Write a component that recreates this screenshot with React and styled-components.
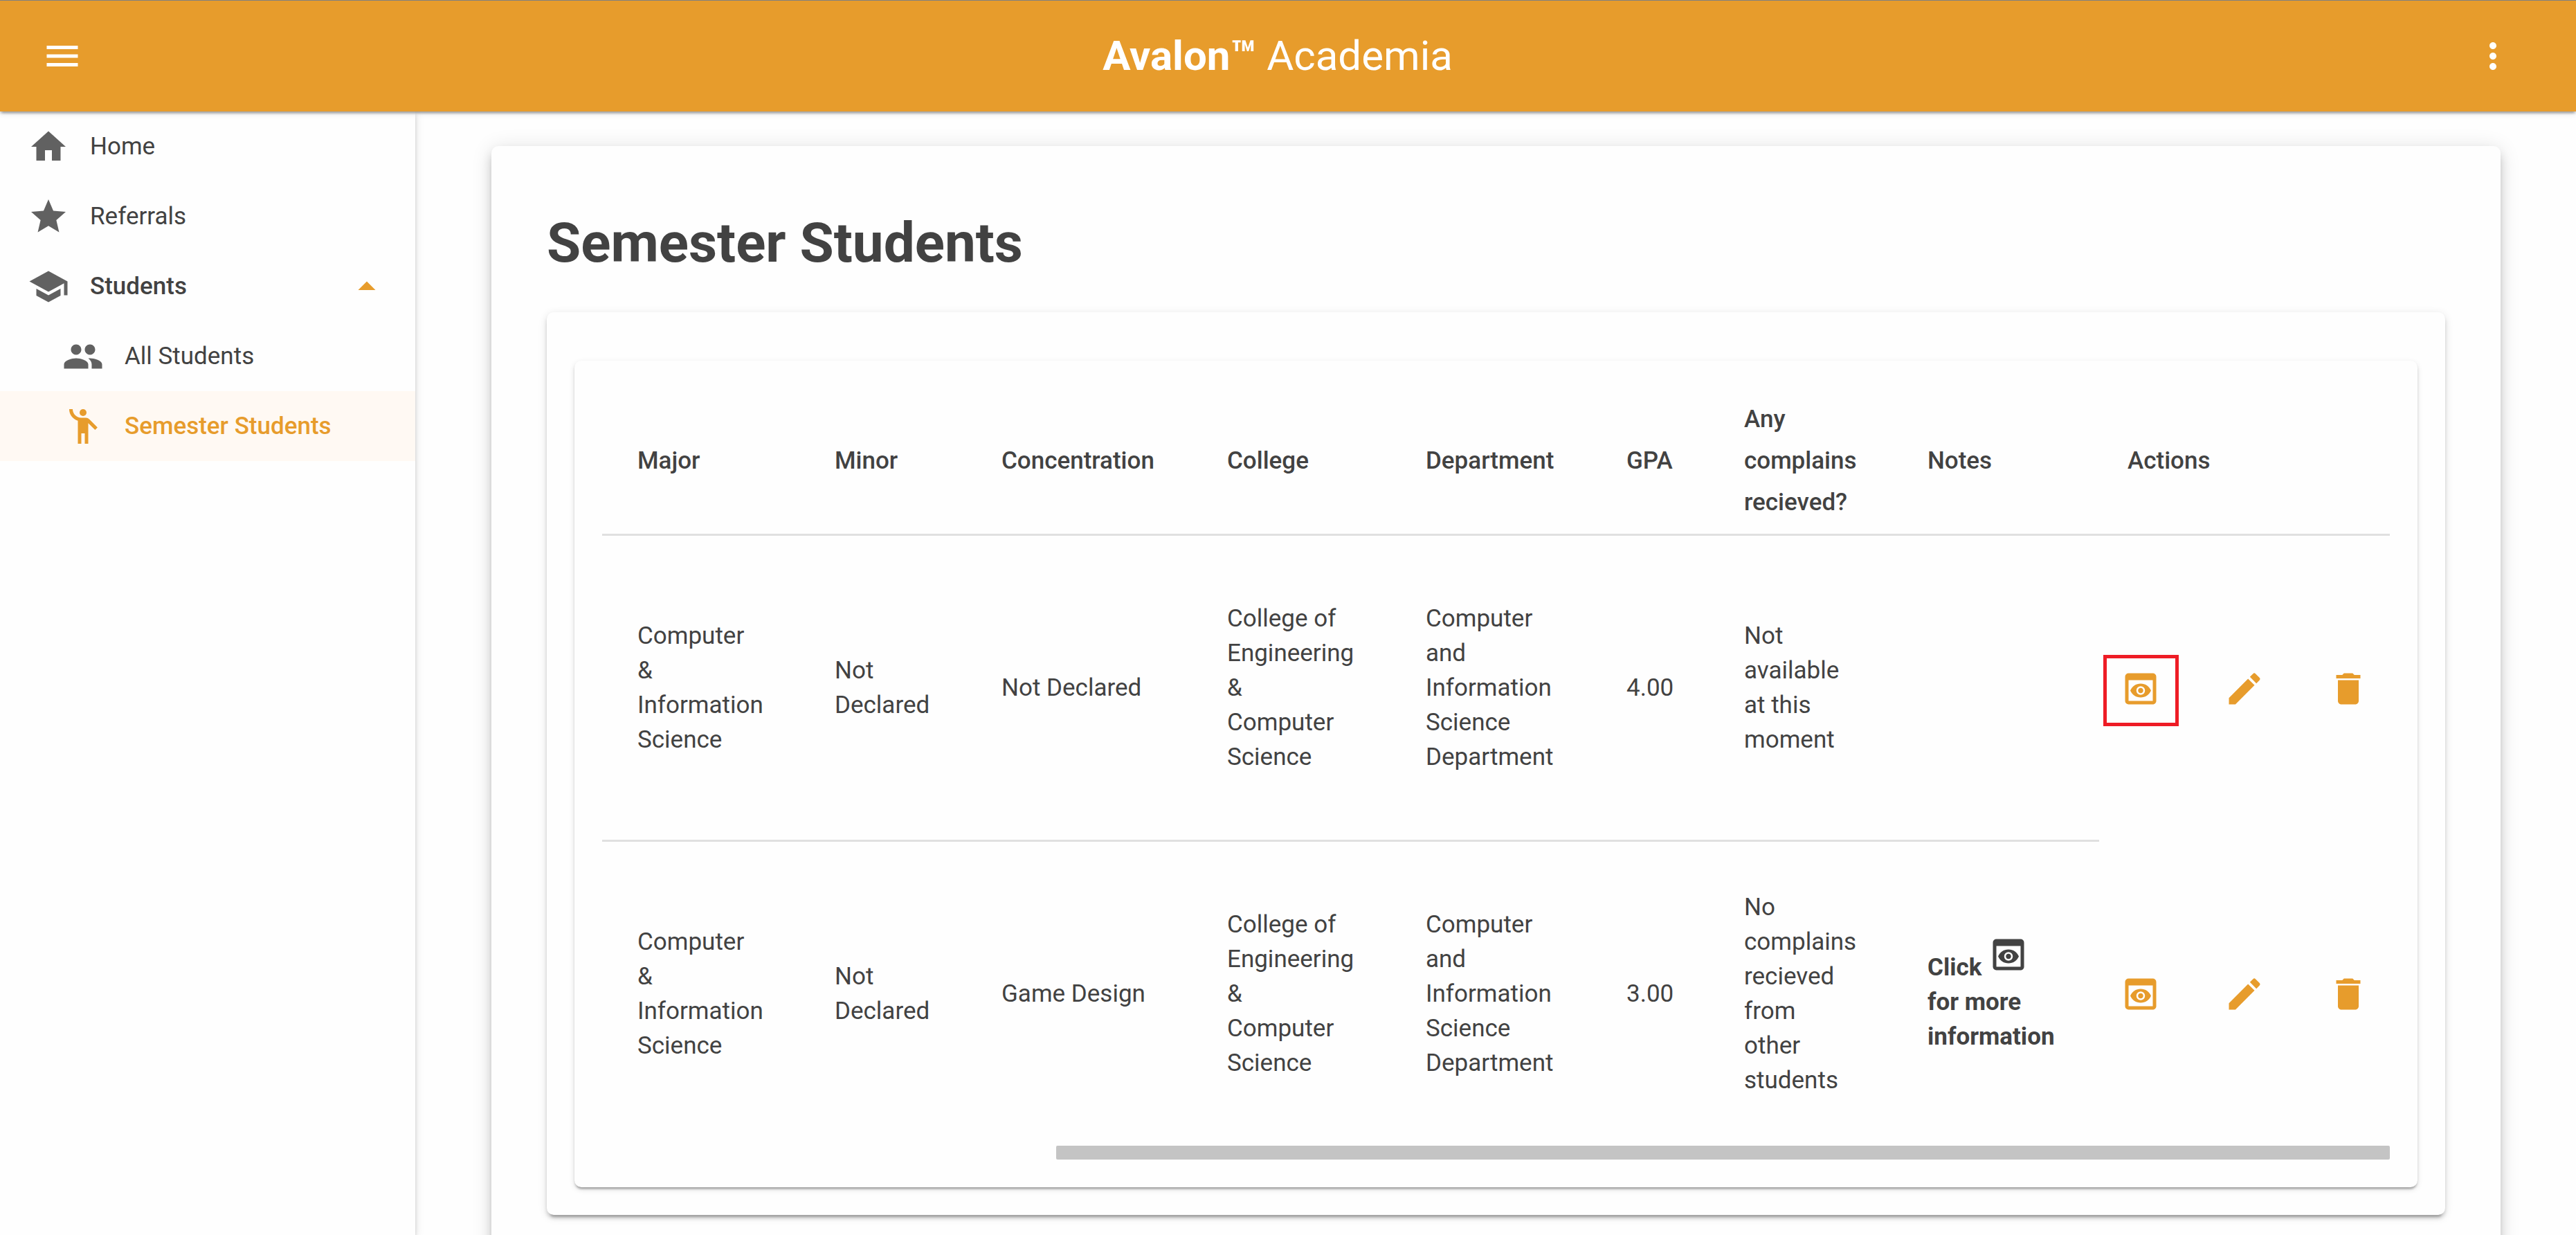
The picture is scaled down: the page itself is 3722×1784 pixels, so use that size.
import React from "react";
import styled, { createGlobalStyle } from "styled-components";
import {
  MdMenu,
  MdMoreVert,
  MdHome,
  MdStar,
  MdSchool,
  MdPeople,
  MdEmojiPeople,
  MdArrowDropUp,
  MdPreview,
  MdEdit,
  MdDelete,
} from "react-icons/md";

const color = {
  brand: "#e79c2c",
  surface: "#fefefe",
  text: "#424242",
  icon: "#616161",
  line: "#e0e0e0",
  selected: "#fff9f3",
  highlight: "#ee1c25",
};

const GlobalStyle = createGlobalStyle`
  *, *::before, *::after { box-sizing: border-box; }
  html, body, #root { height: 100%; }
  body {
    margin: 0;
    overflow: hidden;
    background: ${color.surface};
    color: ${color.text};
    font-family: Roboto, "Liberation Sans", sans-serif;
    font-size: 35px;
    line-height: 50px;
  }
  svg { display: block; width: 60px; height: 60px; }
`;

const Page = styled.div`
  display: flex;
  flex-direction: column;
  height: 100%;
`;

const TopBar = styled.header`
  position: relative;
  z-index: 2;
  flex: none;
  display: flex;
  align-items: center;
  padding: 20px 60px 20px 30px;
  border-top: 1px solid #808080;
  background: ${color.brand};
  color: #fff;
  box-shadow: 0 5px 3px -3px rgba(0, 0, 0, 0.2), 0 3px 3px rgba(0, 0, 0, 0.14),
    0 3px 8px rgba(0, 0, 0, 0.12);
`;

const IconButton = styled.button`
  position: relative;
  display: block;
  padding: 30px;
  border: 0;
  background: none;
  color: inherit;
  cursor: pointer;
`;

const Brand = styled.div`
  flex: 1;
  font-size: 60px;
  line-height: 80px;
  text-align: center;
`;

const Body = styled.div`
  flex: 1;
  min-height: 0;
  display: flex;
`;

const Sidebar = styled.nav`
  position: relative;
  z-index: 1;
  flex: none;
  width: 600px;
  background: ${color.surface};
  box-shadow: 0 5px 5px rgba(0, 0, 0, 0.14), 0 3px 13px rgba(0, 0, 0, 0.12);
`;

const NavItem = styled.a`
  display: flex;
  align-items: center;
  gap: 30px;
  height: 101px;
  padding: 0 40px 0 ${(p) => (p.$nested ? "90px" : "40px")};
  background: ${(p) => (p.$selected ? color.selected : "transparent")};
  color: ${(p) => (p.$selected ? color.brand : color.text)};
  font-weight: ${(p) => (p.$strong || p.$selected ? 500 : 400)};
  text-decoration: none;

  svg:first-child { color: ${(p) => (p.$selected ? color.brand : color.icon)}; }
  svg:last-child { color: ${color.brand}; }
`;

const NavLabel = styled.span`
  flex: 1;
`;

const Content = styled.main`
  flex: 1;
  min-width: 0;
  padding: 50px 109px 0 110px;
`;

const Card = styled.section`
  border-radius: 10px;
  background: ${color.surface};
`;

const PageCard = styled(Card)`
  padding: 80px;
  box-shadow: 0 8px 10px -5px rgba(0, 0, 0, 0.2), 0 10px 15px rgba(0, 0, 0, 0.14),
    0 3px 30px rgba(0, 0, 0, 0.12);
`;

const PanelCard = styled(Card)`
  padding: 70px 40px 40px;
  box-shadow: 0 8px 3px -5px rgba(0, 0, 0, 0.2), 0 5px 5px rgba(0, 0, 0, 0.14),
    0 3px 13px rgba(0, 0, 0, 0.12);
`;

const TableCard = styled(Card)`
  padding: 40px;
  box-shadow: 0 5px 3px -3px rgba(0, 0, 0, 0.2), 0 3px 3px rgba(0, 0, 0, 0.14),
    0 3px 8px rgba(0, 0, 0, 0.12);
`;

const Title = styled.h1`
  margin: 0 0 50px;
  padding-top: 10px;
  font-size: 80px;
  line-height: 100px;
  font-weight: 700;
`;

const Table = styled.table`
  width: 100%;
  table-layout: fixed;
  border-collapse: separate;
  border-spacing: 0;
  text-align: left;
`;

const HeadCell = styled.th`
  padding: 15px 50px 15px ${(p) => (p.$actions ? "41px" : "51px")};
  border-bottom: 3px solid ${color.line};
  font-weight: 500;
  line-height: 60px;
`;

const Cell = styled.td`
  height: ${(p) => (p.$last ? "439px" : "442px")};
  padding: 20px 60px 20px 51px;
  border-bottom: ${(p) => (p.$last ? "0" : `3px solid ${color.line}`)};
`;

const ActionCell = styled.td`
  padding: 0;
  color: ${color.brand};
`;

const Actions = styled.div`
  display: flex;
  gap: 30px;
`;

const Highlight = styled.span`
  position: absolute;
  inset: 11px 5px 6px 6px;
  border: 5px solid ${color.highlight};
`;

const Note = styled.strong`
  font-weight: 700;

  svg { display: inline-block; vertical-align: baseline; }
`;

const ScrollBar = styled.div`
  display: flex;
  justify-content: flex-end;
`;

const ScrollThumb = styled.div`
  width: ${(p) => p.$size}%;
  height: 20px;
  border-radius: 2px;
  background: #c4c4c4;
`;

const columns = [
  { label: "Major", width: 285 },
  { label: "Minor", width: 241 },
  { label: "Concentration", width: 326 },
  { label: "College", width: 287 },
  { label: "Department", width: 290 },
  { label: "GPA", width: 170 },
  { label: "Any complains recieved?", width: 265 },
  { label: "Notes", width: 299 },
  { label: "Actions", width: 420 },
];

const students = [
  {
    cells: [
      "Computer & Information Science",
      "Not Declared",
      "Not Declared",
      "College of Engineering & Computer Science",
      "Computer and Information Science Department",
      "4.00",
      "Not available at this moment",
    ],
    note: false,
    highlighted: true,
  },
  {
    cells: [
      "Computer & Information Science",
      "Not Declared",
      "Game Design",
      "College of Engineering & Computer Science",
      "Computer and Information Science Department",
      "3.00",
      "No complains recieved from other students",
    ],
    note: true,
    highlighted: false,
  },
];

function StudentRow({ student, last }) {
  return (
    <tr>
      {student.cells.map((text, i) => (
        <Cell key={i} $last={last}>{text}</Cell>
      ))}
      <Cell $last={last}>
        {student.note && (
          <Note>
            Click <MdPreview /> for more information
          </Note>
        )}
      </Cell>
      <ActionCell>
        <Actions>
          <IconButton type="button" aria-label="View student">
            <MdPreview />
            {student.highlighted && <Highlight />}
          </IconButton>
          <IconButton type="button" aria-label="Edit student">
            <MdEdit />
          </IconButton>
          <IconButton type="button" aria-label="Delete student">
            <MdDelete />
          </IconButton>
        </Actions>
      </ActionCell>
    </tr>
  );
}

export default function App() {
  return (
    <>
      <GlobalStyle />
      <Page>
        <TopBar>
          <IconButton type="button" aria-label="Menu">
            <MdMenu />
          </IconButton>
          <Brand>
            <b>Avalon™</b> Academia
          </Brand>
          <IconButton type="button" aria-label="More options">
            <MdMoreVert />
          </IconButton>
        </TopBar>
        <Body>
          <Sidebar>
            <NavItem href="#home">
              <MdHome />
              <NavLabel>Home</NavLabel>
            </NavItem>
            <NavItem href="#referrals">
              <MdStar />
              <NavLabel>Referrals</NavLabel>
            </NavItem>
            <NavItem href="#students" $strong>
              <MdSchool />
              <NavLabel>Students</NavLabel>
              <MdArrowDropUp />
            </NavItem>
            <NavItem href="#all-students" $nested>
              <MdPeople />
              <NavLabel>All Students</NavLabel>
            </NavItem>
            <NavItem href="#semester-students" $nested $selected aria-current="page">
              <MdEmojiPeople />
              <NavLabel>Semester Students</NavLabel>
            </NavItem>
          </Sidebar>
          <Content>
            <PageCard>
              <Title>Semester Students</Title>
              <PanelCard>
                <TableCard>
                  <Table>
                    <colgroup>
                      {columns.map((c) => (
                        <col key={c.label} style={{ width: c.width }} />
                      ))}
                    </colgroup>
                    <thead>
                      <tr>
                        {columns.map((c) => (
                          <HeadCell key={c.label} scope="col" $actions={c.label === "Actions"}>
                            {c.label}
                          </HeadCell>
                        ))}
                      </tr>
                    </thead>
                    <tbody>
                      {students.map((s, i) => (
                        <StudentRow key={i} student={s} last={i === students.length - 1} />
                      ))}
                    </tbody>
                  </Table>
                  <ScrollBar>
                    <ScrollThumb $size={74.6} />
                  </ScrollBar>
                </TableCard>
              </PanelCard>
            </PageCard>
          </Content>
        </Body>
      </Page>
    </>
  );
}
